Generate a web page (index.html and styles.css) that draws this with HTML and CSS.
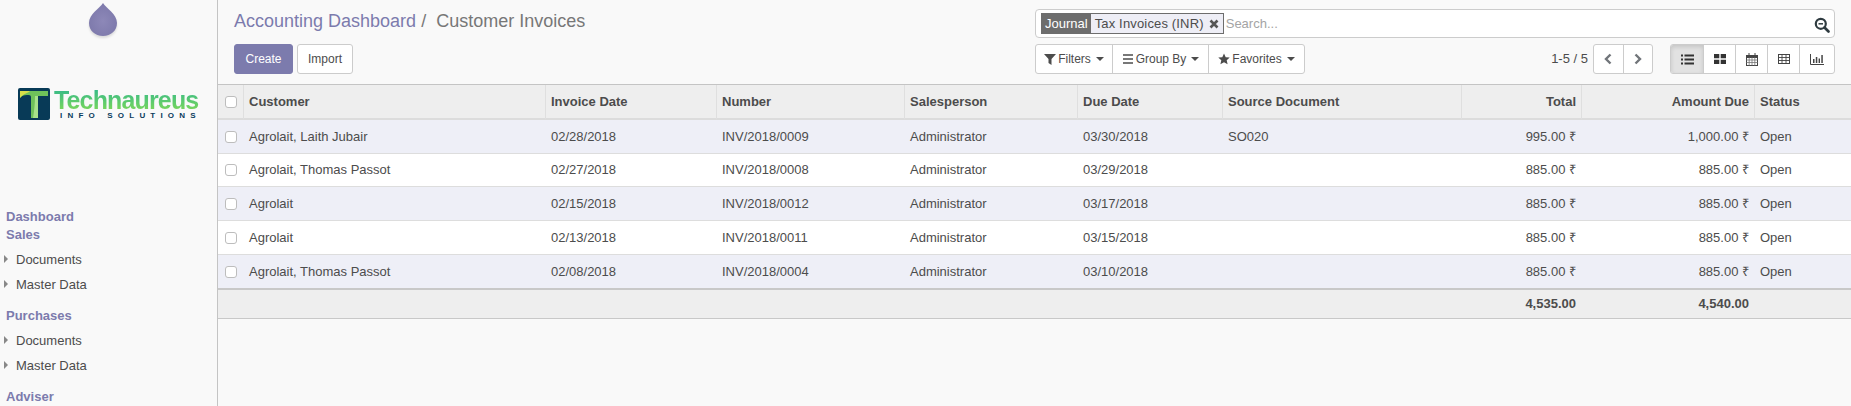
FILE: index.html
```html
<!DOCTYPE html>
<html lang="en">
<head>
<meta charset="utf-8">
<title>Customer Invoices</title>
<link rel="stylesheet" href="styles.css">
</head>
<body>
<div class="app">
  <aside class="sidebar">
    <div class="drop-wrap">
      <svg class="drop" width="30" height="36" viewBox="0 0 30 36"><defs><radialGradient id="dg" cx="50%" cy="55%" r="55%"><stop offset="0" stop-color="#8d88b8"/><stop offset="1" stop-color="#7d79ab"/></radialGradient></defs><path d="M15 3 C18 8 29 14 29 23 C29 30.500 23 36 15 36 C7 36 1 30.500 1 23 C1 14 12 8 15 3Z" fill="url(#dg)"/></svg>
    </div>
    <div class="logo">
      <svg class="logo-mark" width="32" height="32" viewBox="0 0 32 32"><rect width="32" height="32" rx="2" fill="#083a57"/><path d="M2 3 H30 V8 H20 V30 H13 V9 C13 7 11 7 9 7 C6 7 3 8 2 10Z" fill="#6fc25a"/><path d="M2 3 H12 C10 5 5 6 2 10Z" fill="#d8e04a"/><path d="M17 8 H20 V30 H15 C16 24 17 16 17 8Z" fill="#a8e28a"/></svg>
      <div class="logo-text">
        <span class="logo-name">Technaureus</span>
        <span class="logo-sub">INFO SOLUTIONS</span>
      </div>
    </div>
    <nav class="nav">
      <a class="nav-head">Dashboard</a>
      <a class="nav-head">Sales</a>
      <a class="nav-item"><i class="caret-right"></i>Documents</a>
      <a class="nav-item"><i class="caret-right"></i>Master Data</a>
      <a class="nav-head nav-head-gap">Purchases</a>
      <a class="nav-item"><i class="caret-right"></i>Documents</a>
      <a class="nav-item"><i class="caret-right"></i>Master Data</a>
      <a class="nav-head nav-head-gap">Adviser</a>
    </nav>
  </aside>
  <main class="main">
    <header class="panel">
      <div class="panel-left">
        <div class="crumbs"><a class="crumb-link">Accounting Dashboard</a><span class="crumb-sep">/</span><span class="crumb-cur">Customer Invoices</span></div>
        <div class="actions">
          <button class="btn btn-primary">Create</button>
          <button class="btn">Import</button>
        </div>
      </div>
      <div class="panel-right">
        <div class="search">
          <span class="facet"><span class="facet-label">Journal</span><span class="facet-value">Tax Invoices (INR)<svg class="facet-x" width="10" height="10" viewBox="0 0 10 10"><path d="M1.500 1.500 L8.500 8.500 M8.500 1.500 L1.500 8.500" stroke="#555" stroke-width="2.600"/></svg></span></span>
          <span class="search-ph">Search...</span>
          <svg class="search-icon" width="16" height="16" viewBox="0 0 16 16"><circle cx="6.800" cy="6.800" r="5" fill="none" stroke="#2f3b40" stroke-width="2.200"/><path d="M10.500 10.500 L14.500 14.500" stroke="#2f3b40" stroke-width="2.600" stroke-linecap="round"/><path d="M4.500 6.800 H9" stroke="#2f3b40" stroke-width="1.500"/></svg>
        </div>
        <div class="tools">
          <div class="group filters">
            <button class="gbtn"><svg width="12" height="12" viewBox="0 0 12 12"><path d="M0 1 H12 L7.500 6 V12 L4.500 10 V6Z" fill="#4c4c4c"/></svg>Filters<i class="caret"></i></button>
            <button class="gbtn"><svg width="12" height="12" viewBox="0 0 12 12"><path d="M1 2 H11 M1 6 H11 M1 10 H11" stroke="#4c4c4c" stroke-width="1.600"/></svg>Group By<i class="caret"></i></button>
            <button class="gbtn"><svg width="12" height="12" viewBox="0 0 12 12"><path d="M6 0.500 L7.700 4.200 L11.700 4.600 L8.700 7.300 L9.600 11.300 L6 9.200 L2.400 11.300 L3.300 7.300 L0.300 4.600 L4.300 4.200Z" fill="#4c4c4c"/></svg>Favorites<i class="caret"></i></button>
          </div>
          <div class="tools-right">
            <span class="pager-text">1-5 / 5</span>
            <div class="group pager">
              <button class="pbtn"><svg width="10" height="12" viewBox="0 0 10 12"><path d="M7.500 1.500 L3 6 L7.500 10.500" fill="none" stroke="#71757a" stroke-width="2.400"/></svg></button>
              <button class="pbtn"><svg width="10" height="12" viewBox="0 0 10 12"><path d="M2.500 1.500 L7 6 L2.500 10.500" fill="none" stroke="#71757a" stroke-width="2.400"/></svg></button>
            </div>
            <div class="group views">
              <button class="vbtn vbtn-active"><svg width="13" height="11" viewBox="0 0 13 11"><path d="M0 1.500 H2 M3.500 1.500 H13 M0 5.500 H2 M3.500 5.500 H13 M0 9.500 H2 M3.500 9.500 H13" stroke="#333" stroke-width="1.800"/></svg></button>
              <button class="vbtn"><svg width="12" height="10" viewBox="0 0 12 10"><path d="M0 0 H5.300 V4.300 H0Z M6.700 0 H12 V4.300 H6.700Z M0 5.700 H5.300 V10 H0Z M6.700 5.700 H12 V10 H6.700Z" fill="#333"/></svg></button>
              <button class="vbtn"><svg width="12" height="13" viewBox="0 0 12 13"><rect x="0.500" y="2.500" width="11" height="10" fill="none" stroke="#444"/><path d="M0.500 4.500 H11.500 V2.500 H0.500Z M3 0 V3 M9 0 V3" fill="#444" stroke="#444"/><path d="M0.500 7 H11.500 M0.500 9.500 H11.500 M3.200 4.500 V12.500 M6 4.500 V12.500 M8.800 4.500 V12.500" stroke="#777" stroke-width="0.800"/></svg></button>
              <button class="vbtn"><svg width="12" height="10" viewBox="0 0 12 10"><rect x="0.500" y="0.500" width="11" height="9" fill="none" stroke="#444"/><path d="M0.500 3.500 H11.500 M0.500 6.500 H11.500 M4 0.500 V9.500 M8 0.500 V9.500" stroke="#444" stroke-width="0.900"/></svg></button>
              <button class="vbtn vbtn-last"><svg width="14" height="11" viewBox="0 0 14 11"><path d="M0.500 0 V10.500 H14" fill="none" stroke="#444"/><path d="M3 5 H4.500 V9 H3Z M5.800 3 H7.300 V9 H5.800Z M8.600 4.500 H10 V9 H8.600Z M11.300 1 H12.800 V9 H11.300Z" fill="#444"/></svg></button>
            </div>
          </div>
        </div>
      </div>
    </header>
    <table class="list">
      <colgroup>
        <col class="c-check"><col class="c-cust"><col class="c-date"><col class="c-num"><col class="c-sales"><col class="c-due"><col class="c-src"><col class="c-total"><col class="c-amt"><col class="c-status">
      </colgroup>
      <thead>
        <tr><th class="chk"><i class="box"></i></th><th>Customer</th><th>Invoice Date</th><th>Number</th><th>Salesperson</th><th>Due Date</th><th>Source Document</th><th class="num">Total</th><th class="num">Amount Due</th><th>Status</th></tr>
      </thead>
      <tbody>
        <tr><td class="chk"><i class="box"></i></td><td>Agrolait, Laith Jubair</td><td>02/28/2018</td><td>INV/2018/0009</td><td>Administrator</td><td>03/30/2018</td><td>SO020</td><td class="num">995.00 ₹</td><td class="num">1,000.00 ₹</td><td>Open</td></tr>
        <tr><td class="chk"><i class="box"></i></td><td>Agrolait, Thomas Passot</td><td>02/27/2018</td><td>INV/2018/0008</td><td>Administrator</td><td>03/29/2018</td><td></td><td class="num">885.00 ₹</td><td class="num">885.00 ₹</td><td>Open</td></tr>
        <tr><td class="chk"><i class="box"></i></td><td>Agrolait</td><td>02/15/2018</td><td>INV/2018/0012</td><td>Administrator</td><td>03/17/2018</td><td></td><td class="num">885.00 ₹</td><td class="num">885.00 ₹</td><td>Open</td></tr>
        <tr><td class="chk"><i class="box"></i></td><td>Agrolait</td><td>02/13/2018</td><td>INV/2018/0011</td><td>Administrator</td><td>03/15/2018</td><td></td><td class="num">885.00 ₹</td><td class="num">885.00 ₹</td><td>Open</td></tr>
        <tr><td class="chk"><i class="box"></i></td><td>Agrolait, Thomas Passot</td><td>02/08/2018</td><td>INV/2018/0004</td><td>Administrator</td><td>03/10/2018</td><td></td><td class="num">885.00 ₹</td><td class="num">885.00 ₹</td><td>Open</td></tr>
      </tbody>
      <tfoot>
        <tr><td></td><td></td><td></td><td></td><td></td><td></td><td></td><td class="num">4,535.00</td><td class="num">4,540.00</td><td></td></tr>
      </tfoot>
    </table>
  </main>
</div>
</body>
</html>
```
FILE: styles.css
```css
* { box-sizing: border-box; }
html, body { margin: 0; height: 100%; overflow: hidden; }
body {
  background: #f9f9f9;
  color: #4c4c4c;
  font: 13px/18px "Liberation Sans", Arial, sans-serif;
}
button { font: inherit; color: inherit; cursor: pointer; }
.app { display: flex; height: 406px; }

/* Sidebar */
.sidebar {
  width: 218px;
  flex: none;
  border-right: 1px solid #c4c4c4;
  overflow: hidden;
}
.drop-wrap { display: flex; justify-content: center; padding-right: 12px; height: 87px; }
.drop { filter: drop-shadow(0 2px 1px rgba(0, 0, 0, .12)); }
.logo { display: flex; align-items: center; gap: 4px; padding-left: 18px; height: 34px; }
.logo-text { display: flex; flex-direction: column; width: 146px; }
.logo-name {
  font-size: 25px;
  font-weight: bold;
  line-height: 23px;
  letter-spacing: -.85px;
  background: linear-gradient(#35b98a, #7ed957);
  -webkit-background-clip: text;
  background-clip: text;
  color: transparent;
  white-space: nowrap;
}
.logo-sub {
  font-size: 8px;
  line-height: 8px;
  font-weight: bold;
  letter-spacing: 5.2px;
  color: #0b3c5d;
  padding-left: 6px;
  white-space: nowrap;
}
.nav { display: flex; flex-direction: column; padding-top: 87px; }
.nav-head { color: #7c7bad; font-weight: bold; padding-left: 6px; height: 18px; line-height: 18px; }
.nav-head-gap { margin-top: 10px; }
.nav-item { position: relative; padding-left: 16px; height: 25px; line-height: 25px; }
.nav-head + .nav-item { margin-top: 3px; }
.caret-right {
  position: absolute;
  left: 4px;
  top: 8px;
  border-left: 4px solid #888;
  border-top: 4px solid transparent;
  border-bottom: 4px solid transparent;
}

/* Main */
.main { flex: 1; min-width: 0; }
.panel {
  display: flex;
  justify-content: space-between;
  height: 85px;
  padding: 9px 16px 0 16px;
  border-bottom: 1px solid #c4c4c4;
}
.crumbs { font-size: 18px; line-height: 25px; height: 35px; display: flex; }
.crumb-link { color: #7c7bad; }
.crumb-sep { color: #777; margin: 0 10px 0 5px; }
.crumb-cur { color: #777; }
.actions { display: flex; gap: 4px; }
.btn {
  height: 30px;
  padding: 0 10px;
  border: 1px solid #ccc;
  border-radius: 3px;
  background: #fff;
  font-size: 12px;
  color: #4c4c4c;
}
.btn-primary { width: 59px; background: #7c7bad; border-color: #7c7bad; color: #fff; }
.panel-right { width: 800px; }
.search {
  position: relative;
  height: 29px;
  display: flex;
  align-items: center;
  padding-left: 5px;
  background: #fff;
  border: 1px solid #ccc;
  border-radius: 4px;
}
.facet { display: flex; height: 21px; border: 1px solid #6d6d6d; line-height: 19px; }
.facet-label { background: #6d6d6d; color: #fff; padding: 0 3px 0 3px; }
.facet-value { background: #eeeef6; padding: 0 4px 0 4px; display: flex; align-items: center; gap: 5px; letter-spacing: .16px; }
.search-ph { color: #a4a4a4; margin-left: 2px; }
.search-icon { position: absolute; right: 4px; top: 7px; }
.tools { display: flex; justify-content: space-between; margin-top: 6px; }
.tools-right { display: flex; align-items: center; }
.group {
  display: flex;
  height: 30px;
  background: #fff;
  border: 1px solid #ccc;
  border-radius: 3px;
}
.group > button { background: transparent; border: 0; border-left: 1px solid #ccc; padding: 0; display: flex; align-items: center; justify-content: center; }
.group > button:first-child { border-left: 0; }
.gbtn { font-size: 12px; gap: 2px; white-space: nowrap; }
.filters > .gbtn:nth-child(1) { width: 76px; }
.filters > .gbtn:nth-child(2) { width: 96px; }
.filters > .gbtn:nth-child(3) { width: 96px; }
.caret {
  display: inline-block;
  margin-left: 3px;
  border-top: 4px solid #4c4c4c;
  border-left: 4px solid transparent;
  border-right: 4px solid transparent;
}
.pager-text { font-size: 13px; color: #4c4c4c; margin-right: 5px; }
.pager { width: 60px; }
.pbtn { flex: 1; }
.views { width: 165px; margin-left: 17px; }
.vbtn { width: 32px; flex: none; }
.vbtn-last { flex: 1; }
.vbtn-active { background: #e2e2e2 !important; box-shadow: inset 0 2px 4px rgba(0, 0, 0, .13); border-radius: 2px 0 0 2px; }

/* List */
.list { width: 1633px; border-collapse: separate; border-spacing: 0; table-layout: fixed; }
.c-check { width: 25px; }
.c-cust { width: 302px; }
.c-date { width: 171px; }
.c-num { width: 188px; }
.c-sales { width: 173px; }
.c-due { width: 145px; }
.c-src { width: 239px; }
.c-total { width: 120px; }
.c-amt { width: 173px; }
.c-status { width: 97px; }
.list th, .list td { padding: 0 5px 0 6px; overflow: hidden; white-space: nowrap; text-align: left; }
.list th {
  height: 35px;
  padding-left: 5px;
  background: #eee;
  font-weight: bold;
  border-left: 1px solid #dfdfdf;
  border-bottom: 2px solid #dcdcdc;
}
.list th:first-child { border-left: 0; }
.list td { height: 34px; border-bottom: 1px solid #ddd; }
.list tbody tr:nth-child(2) td { height: 33px; }
.list tbody tr:last-child td { height: 33px; border-bottom: 0; }
.list tbody tr:nth-child(odd) { background: #eeeff7; }
.list tbody tr:nth-child(even) { background: #fff; }
.list .num { text-align: right; }
.list th.chk, .list td.chk { padding: 0 0 0 7px; }
.box {
  display: block;
  width: 12px;
  height: 12px;
  border: 1px solid #bdbdbd;
  border-radius: 3px;
  background: #fff;
}
.list tfoot td {
  height: 31px;
  background: #eee;
  font-weight: bold;
  border-top: 2px solid #c8c8c8;
  border-bottom: 1px solid #c8c8c8;
}
```
